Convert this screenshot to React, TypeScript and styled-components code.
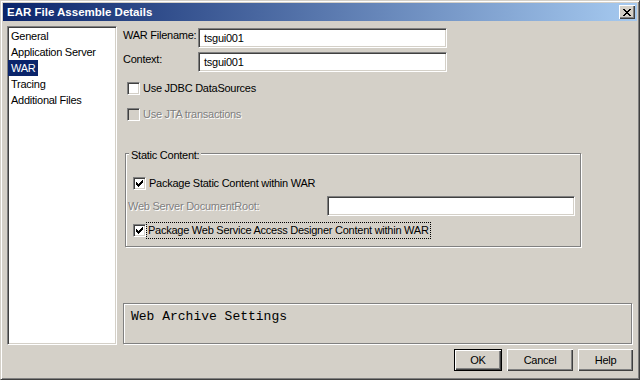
import styled, { createGlobalStyle } from 'styled-components';

const GlobalStyle = createGlobalStyle`
  html, body {
    margin: 0;
    padding: 0;
    background: #d4d0c8;
  }
  body {
    font-family: "Liberation Sans", Arial, sans-serif;
    font-size: 11px;
    letter-spacing: -0.25px;
    color: #000;
  }
`;

const Window = styled.div`
  width: 640px;
  height: 380px;
  box-sizing: border-box;
  background: #d4d0c8;
  border: 1px solid;
  border-color: #d4d0c8 #404040 #404040 #d4d0c8;
  box-shadow: inset 1px 1px 0 #fff, inset -1px -1px 0 #808080;
  padding: 2px;
  display: flex;
  flex-direction: column;
`;

const TitleBar = styled.div`
  height: 18px;
  flex: none;
  display: flex;
  align-items: center;
  padding: 0 2px;
  background: linear-gradient(to right, #0a246a, #a6caf0);
`;

const TitleText = styled.span`
  color: #fff;
  font-weight: bold;
  font-size: 11.5px;
  letter-spacing: 0;
  margin-left: 2px;
`;

const raised = `
  background: #d4d0c8;
  box-shadow: inset 1px 1px 0 #fff, inset -1px -1px 0 #404040, inset -2px -2px 0 #808080;
`;

const sunken = `
  border: 1px solid;
  border-color: #808080 #fff #fff #808080;
  box-shadow: inset 1px 1px 0 #404040, inset -1px -1px 0 #d4d0c8;
`;

const etched = `
  border: 1px solid #808080;
  box-shadow: inset 1px 1px 0 #fff, 1px 1px 0 #fff;
`;

const CloseButton = styled.div`
  ${raised}
  margin-left: auto;
  width: 16px;
  height: 14px;
  display: flex;
  align-items: center;
  justify-content: center;
`;

const Body = styled.div`
  flex: 1;
  display: flex;
  flex-direction: column;
  padding: 5px 4px 6px 4px;
  min-height: 0;
`;

const MainRow = styled.div`
  flex: 1;
  display: flex;
  min-height: 0;
`;

const ListBox = styled.div`
  ${sunken}
  width: 110px;
  flex: none;
  box-sizing: border-box;
  background: #fff;
  padding: 1px 0;
`;

const ListItem = styled.div`
  height: 16px;
  line-height: 16px;
  white-space: nowrap;
`;

const ItemText = styled.span<{ $selected?: boolean }>`
  display: inline-block;
  padding: 0 2px 0 3px;
  background: ${p => (p.$selected ? '#0a246a' : 'transparent')};
  color: ${p => (p.$selected ? '#fff' : '#000')};
`;

const RightCol = styled.div`
  flex: 1;
  margin-left: 6px;
  padding: 2px 1px 0 0;
  display: flex;
  flex-direction: column;
`;

const FieldRow = styled.div`
  display: flex;
  align-items: flex-start;
  & + & {
    margin-top: 4px;
  }
`;

const FieldLabel = styled.label`
  width: 75px;
  flex: none;
  white-space: nowrap;
  line-height: 15px;
`;

const TextInput = styled.div<{ $width: number }>`
  ${sunken}
  width: ${p => p.$width}px;
  flex: none;
  height: 20px;
  box-sizing: border-box;
  background: #fff;
  padding: 0 5px;
  line-height: 18px;
`;

const CheckRow = styled.div<{ $top: number; $left: number }>`
  display: flex;
  align-items: center;
  height: 17px;
  white-space: nowrap;
  margin-top: ${p => p.$top}px;
  margin-left: ${p => p.$left}px;
`;

const Box = styled.div<{ $disabled?: boolean }>`
  ${sunken}
  width: 13px;
  height: 13px;
  flex: none;
  box-sizing: border-box;
  background: ${p => (p.$disabled ? '#d4d0c8' : '#fff')};
  display: flex;
  align-items: center;
  justify-content: center;
`;

const CheckLabel = styled.span<{ $disabled?: boolean; $focused?: boolean }>`
  margin-left: ${p => (p.$focused ? 1 : 2)}px;
  line-height: 15px;
  padding: 0 1px;
  color: ${p => (p.$disabled ? '#808080' : '#000')};
  text-shadow: ${p => (p.$disabled ? '1px 1px 0 #fff' : 'none')};
  outline: ${p => (p.$focused ? '1px dotted #000' : 'none')};
`;

const GroupBox = styled.div`
  ${etched}
  margin: 30px 0 0 2px;
  width: 456px;
  box-sizing: border-box;
  padding: 0 5px 7px 0;
`;

const GroupTitle = styled.div`
  display: table;
  margin: -6px 0 0 3px;
  padding: 0 2px;
  line-height: 14px;
  background: #d4d0c8;
`;

const DocRow = styled.div`
  display: flex;
  align-items: center;
  margin-top: 4px;
  margin-left: 2px;
`;

const DisabledLabel = styled.span`
  flex: 1;
  white-space: nowrap;
  color: #808080;
  text-shadow: 1px 1px 0 #fff;
`;

const DescBox = styled.div`
  ${etched}
  margin-top: auto;
  margin-bottom: 1px;
  height: 41px;
  box-sizing: border-box;
  padding: 5px 7px;
  font-family: "Liberation Mono", "Courier New", monospace;
  font-size: 13px;
  letter-spacing: 0;
  line-height: 16px;
`;

const ButtonRow = styled.div`
  display: flex;
  justify-content: flex-end;
  gap: 5px;
  margin-top: 4px;
`;

const Button = styled.div<{ $width: number; $default?: boolean }>`
  ${raised}
  width: ${p => p.$width}px;
  height: 22px;
  box-sizing: border-box;
  border: ${p => (p.$default ? '1px solid #000' : 'none')};
  display: flex;
  align-items: center;
  justify-content: center;
`;

const CHECK_COLS = [2, 3, 4, 3, 2, 1, 0];

const CheckMark = () => (
  <svg width="7" height="7" viewBox="0 0 7 7" shapeRendering="crispEdges">
    {CHECK_COLS.map((y, x) => (
      <rect key={x} x={x} y={y} width="1" height="3" fill="#000" />
    ))}
  </svg>
);

const X_ROWS: [number, number][][] = [
  [[0, 2], [6, 2]],
  [[1, 2], [5, 2]],
  [[2, 4]],
  [[3, 2]],
  [[2, 4]],
  [[1, 2], [5, 2]],
  [[0, 2], [6, 2]],
];

const CloseGlyph = () => (
  <svg width="8" height="7" viewBox="0 0 8 7" shapeRendering="crispEdges">
    {X_ROWS.map((segs, y) =>
      segs.map(([x, w]) => <rect key={`${y}-${x}`} x={x} y={y} width={w} height="1" fill="#000" />)
    )}
  </svg>
);

const Checkbox = ({
  label, checked, disabled, focused, top, left,
}: {
  label: string; checked?: boolean; disabled?: boolean; focused?: boolean; top: number; left: number;
}) => (
  <CheckRow $top={top} $left={left}>
    <Box $disabled={disabled}>{checked && <CheckMark />}</Box>
    <CheckLabel $disabled={disabled} $focused={focused}>{label}</CheckLabel>
  </CheckRow>
);

const pages = ['General', 'Application Server', 'WAR', 'Tracing', 'Additional Files'];

export default function App() {
  return (
    <>
      <GlobalStyle />
      <Window>
        <TitleBar>
          <TitleText>EAR File Assemble Details</TitleText>
          <CloseButton>
            <CloseGlyph />
          </CloseButton>
        </TitleBar>
        <Body>
          <MainRow>
            <ListBox>
              {pages.map(p => (
                <ListItem key={p}>
                  <ItemText $selected={p === 'WAR'}>{p}</ItemText>
                </ListItem>
              ))}
            </ListBox>
            <RightCol>
              <FieldRow>
                <FieldLabel>WAR Filename:</FieldLabel>
                <TextInput $width={249}>tsgui001</TextInput>
              </FieldRow>
              <FieldRow>
                <FieldLabel>Context:</FieldLabel>
                <TextInput $width={249}>tsgui001</TextInput>
              </FieldRow>
              <Checkbox label="Use JDBC DataSources" top={8} left={4} />
              <Checkbox label="Use JTA transactions" disabled top={9} left={4} />
              <GroupBox>
                <GroupTitle>Static Content:</GroupTitle>
                <Checkbox label="Package Static Content within WAR" checked top={13} left={7} />
                <DocRow>
                  <DisabledLabel>Web Server DocumentRoot:</DisabledLabel>
                  <TextInput $width={248} />
                </DocRow>
                <Checkbox
                  label="Package Web Service Access Designer Content within WAR"
                  checked
                  focused
                  top={6}
                  left={7}
                />
              </GroupBox>
              <DescBox>Web Archive Settings</DescBox>
            </RightCol>
          </MainRow>
          <ButtonRow>
            <Button $width={48} $default>OK</Button>
            <Button $width={66}>Cancel</Button>
            <Button $width={55}>Help</Button>
          </ButtonRow>
        </Body>
      </Window>
    </>
  );
}
